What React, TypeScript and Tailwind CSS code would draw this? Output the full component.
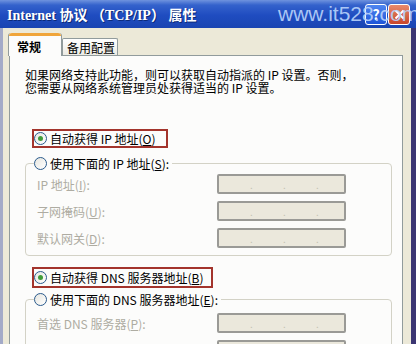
import React from "react";

function Radio({ checked }: { checked?: boolean }) {
  return (
    <span className="flex h-[13px] w-[13px] shrink-0 items-center justify-center rounded-full border border-[#2a5a8c] bg-[linear-gradient(135deg,#e6e6e0,#ffffff)]">
      {checked && <span className="h-[5px] w-[5px] rounded-full bg-[#3f9c3a]" />}
    </span>
  );
}

function IpBox() {
  return (
    <div className="flex h-[20px] w-[129px] items-end rounded-[2px] border-2 border-[#9a9a96] bg-[#ebe8dc] pb-[2px] pl-[31px] text-[10px] leading-[10px] text-[#c4c1b2]">
      <span className="w-[33px]">.</span>
      <span className="w-[33px]">.</span>
      <span>.</span>
    </div>
  );
}

function Row({ label, k, rest }: { label: string; k: string; rest?: string }) {
  return (
    <div className="flex h-[20px] items-center">
      <span className="w-[183px] pl-[3px] text-[#aeaca2]">
        {label}(<span className="underline">{k}</span>){rest ?? ":"}
      </span>
      <IpBox />
    </div>
  );
}

export default function App() {
  return (
    <div className="flex h-[344px] w-[416px] flex-col overflow-hidden bg-[#ece9d8] font-['Noto_Sans_CJK_SC',sans-serif] text-[12px] leading-[13px] text-black">
      {/* title bar */}
      <div className="relative flex h-[28px] shrink-0 items-center bg-[linear-gradient(180deg,#6f93de_0%,#3462cc_18%,#1f4cc0_55%,#1a45b2_100%)] pl-[7px] pr-[6px]">
        <span className="flex-1 pt-[3px] font-['Liberation_Serif','Noto_Sans_CJK_SC',serif] text-[14px] font-bold leading-[18px] text-white [text-shadow:1px_1px_0_#0c2a78]">
          Internet 协议 （TCP/IP） 属性
        </span>
        <div className="flex gap-[1px]">
          <div className="flex h-[21px] w-[22px] items-center justify-center rounded-[3px] border border-white bg-[linear-gradient(180deg,#4f86f0,#1f55d8)] text-[14px] font-bold text-white">
            ?
          </div>
          <div className="flex h-[21px] w-[22px] items-center justify-center rounded-[3px] border border-white bg-[linear-gradient(180deg,#e98a6c,#c8452a)] text-white">
            <svg width="11" height="11" viewBox="0 0 11 11">
              <path d="M1.5 1.5 L9.5 9.5 M9.5 1.5 L1.5 9.5" stroke="white" strokeWidth="2" />
            </svg>
          </div>
        </div>
        <span className="absolute left-[278px] top-[2px] font-['Liberation_Sans',sans-serif] text-[21px] leading-[24px] text-[#b9d3fb] opacity-90">
          www.it528.com
        </span>
      </div>

      {/* body */}
      <div className="flex min-h-0 flex-1 border-l-[3px] border-r-[5px] border-l-[#a3aac8] border-r-[#3b3572] pl-[6px] pt-[5px]">
        <div className="flex w-[394px] flex-col">
          {/* tabs */}
          <div className="flex items-end">
            <div className="relative z-10 -mb-px -ml-px flex h-[23px] w-[54px] flex-col rounded-t-[3px] border-x border-[#919b9c] bg-[#fcfcfb]">
              <div className="h-[3px] rounded-t-[3px] bg-[#f0a53a]" />
              <span className="pl-[8px] pt-[4px] text-[12px] font-bold">常规</span>
            </div>
            <div className="flex h-[17px] w-[56px] items-center rounded-t-[2px] border-x border-t border-[#919b9c] bg-[linear-gradient(180deg,#ffffff,#ecebe4)] pl-[4px] pt-[1px]">
              备用配置
            </div>
          </div>
          {/* pane */}
          <div className="h-[300px] shrink-0 border border-[#919b9c] bg-[#fcfcfb] pl-[15px]">
            <p className="mt-[12px]">
              如果网络支持此功能，则可以获取自动指派的 IP 设置。否则，
              <br />
              您需要从网络系统管理员处获得适当的 IP 设置。
            </p>

            <div className="ml-[7px] mt-[35px] flex h-[19px] w-[136px] items-center gap-[3px] border-2 border-[#a3342c]">
              <Radio checked />
              <span>
                自动获得 IP 地址(<span className="underline">O</span>)
              </span>
            </div>

            <fieldset className="mt-[7px] w-[367px] rounded-[4px] border border-[#d3d2c6] px-[8px] pb-[7px] pt-[3px]">
              <legend className="flex h-[16px] items-center gap-[3px] pr-[3px]">
                <Radio />
                <span>
                  使用下面的 IP 地址(<span className="underline">S</span>):
                </span>
              </legend>
              <div className="flex flex-col gap-[7px]">
                <Row label="IP 地址" k="I" />
                <Row label="子网掩码" k="U" />
                <Row label="默认网关" k="D" />
              </div>
            </fieldset>

            <div className="ml-[7px] mt-[11px] flex h-[21px] w-[181px] items-center gap-[3px] border-2 border-[#a3342c]">
              <Radio checked />
              <span>
                自动获得 DNS 服务器地址(<span className="underline">B</span>)
              </span>
            </div>

            <fieldset className="mt-[3px] w-[367px] rounded-[4px] border border-[#d3d2c6] px-[8px] pb-[7px] pt-[6px]">
              <legend className="flex h-[16px] items-center gap-[3px] pr-[3px]">
                <Radio />
                <span>
                  使用下面的 DNS 服务器地址(<span className="underline">E</span>):
                </span>
              </legend>
              <div className="flex flex-col gap-[7px]">
                <Row label="首选 DNS 服务器" k="P" />
                <Row label="备用 DNS 服务器" k="A" />
              </div>
            </fieldset>
          </div>
        </div>
      </div>
    </div>
  );
}
